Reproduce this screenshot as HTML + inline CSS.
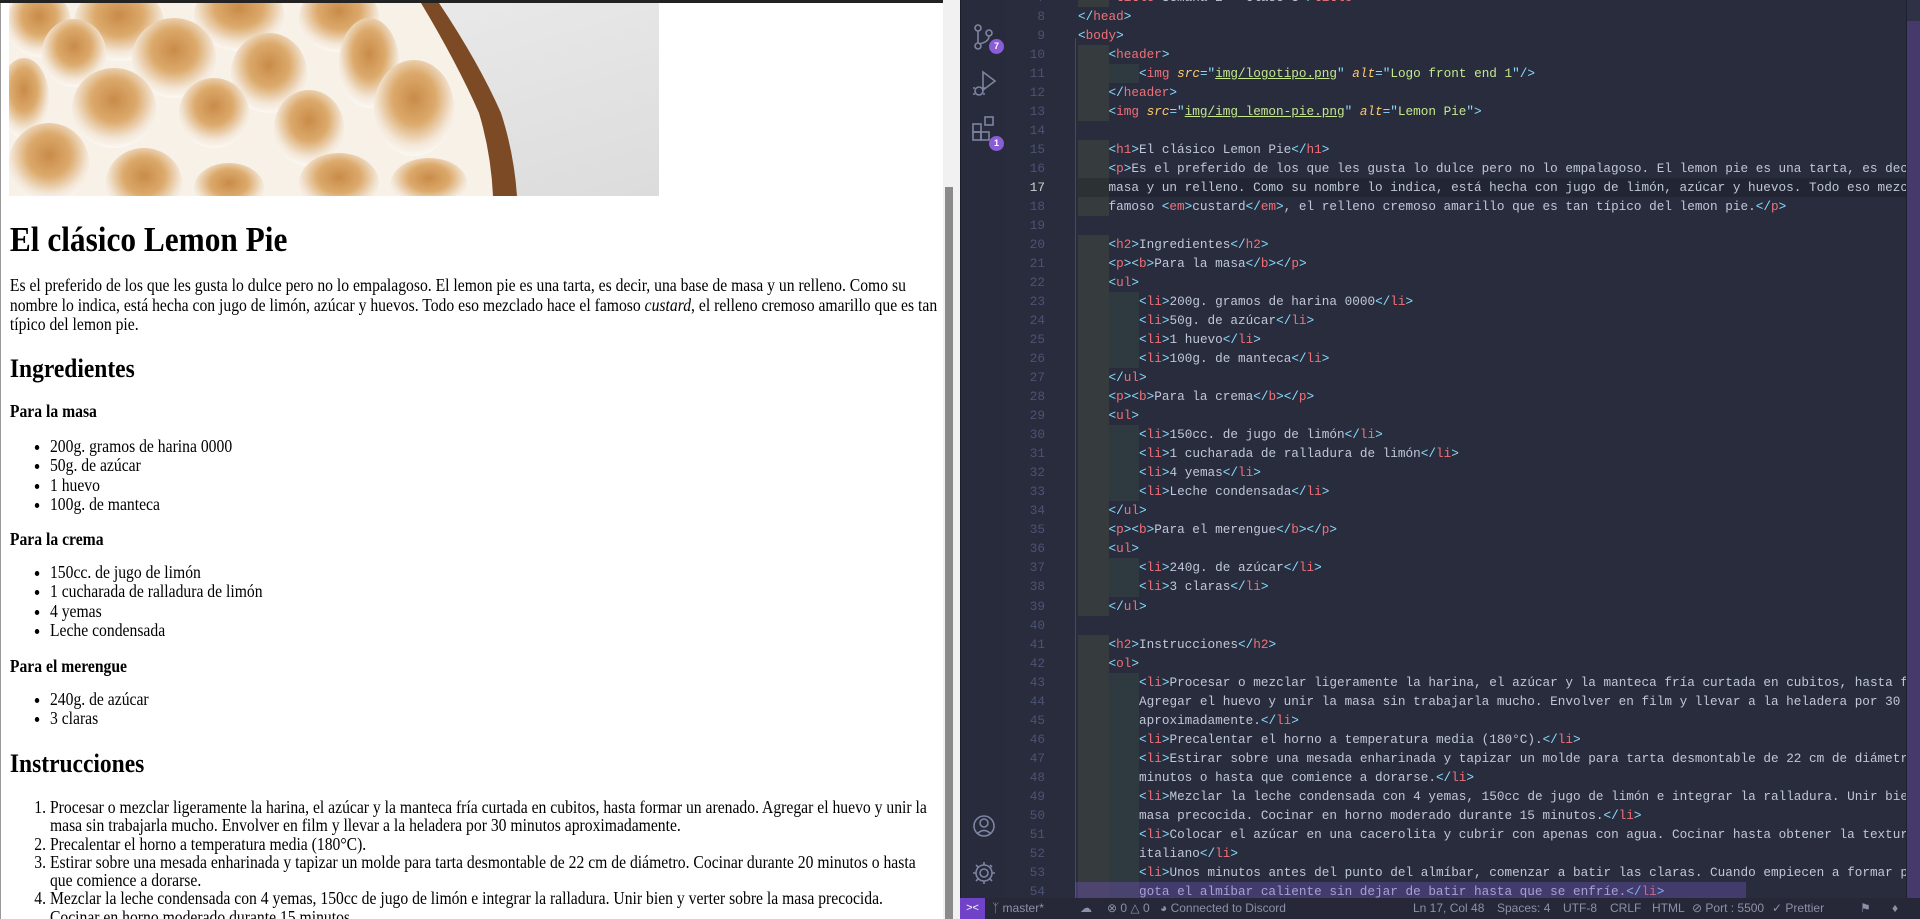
<!DOCTYPE html>
<html><head><meta charset="utf-8">
<style>
*{margin:0;padding:0;box-sizing:border-box}
html,body{width:1920px;height:919px;overflow:hidden;background:#292c3d}
#left{position:absolute;left:0;top:0;width:943px;height:919px;background:#fff;overflow:hidden;font-family:"Liberation Serif",serif;color:#000;border-left:1px solid #999}
#sc{position:absolute;left:0;top:0;width:1060px;height:919px;transform:scaleX(0.89);transform-origin:0 0}
#topbar{position:absolute;left:0;top:0;width:960px;height:3px;background:#222}
.abs{position:absolute;left:10px;white-space:nowrap}
h1{font-size:35.2px;line-height:40px;font-weight:bold}
h2{font-size:26.4px;line-height:30px;font-weight:bold}
.tx{font-size:17.6px}
ul.b,ol.n{position:absolute;left:55px;font-size:17.6px;line-height:19.3px;white-space:nowrap}
ul.b li{list-style:disc}
ol.n li{list-style:decimal}
#sb{position:absolute;left:943px;top:0;width:17px;height:919px;background:#f1f1f1}
#thumb{position:absolute;left:945px;top:187px;width:8px;height:732px;background:#8a8a8a}
#act{position:absolute;left:960px;top:0;width:46px;height:898px;background:#282b3b;border-left:1px solid #1c1e2a}
#ed{position:absolute;left:1006px;top:0;width:900px;height:898px;background:#292c3d;overflow:hidden}
#mm{position:absolute;left:1906px;top:0;width:14px;height:898px;background:#453a6b;border-left:1px solid #1e2030}
#mm2{position:absolute;left:1907px;top:0;width:13px;height:21px;background:#2f3146}
#lines{position:absolute;left:0;top:-12px;width:900px;font-family:"Liberation Mono",monospace;font-size:12.7px;line-height:19.02px;color:#bfc7d8}
.l{position:relative;height:19.02px;white-space:pre;padding-left:72px}
.l .num{position:absolute;left:0;width:39px;text-align:right;color:#4c5374}
.g1,.g2{display:inline-block;width:30.5px;height:19.02px;vertical-align:top}
.g1{background:#363b3e}.g2{background:#2f3a40}
.c{color:#89ddff}.t{color:#f07178}.a{color:#ffcb6b;font-style:italic}.s{color:#c3e88d;text-decoration:underline;text-decoration-color:#c3e88d}
.cur::before{content:"";position:absolute;left:72px;top:0;right:0;height:19px;background:#222534;z-index:-1}
#lines{z-index:1}
.cur .num{color:#d0d0d0}
.cur .g1{background:#2c3134}
.sel::after{content:"";position:absolute;left:69px;top:0;width:671px;height:19px;background:rgba(120,90,200,.35)}
#redl{position:absolute;left:1075px;top:38px;width:1px;height:860px;background:#7a3440}
#status{position:absolute;left:960px;top:898px;width:960px;height:21px;background:#262838;font-family:"Liberation Sans",sans-serif;font-size:12px;color:#8c91a8;line-height:21px;white-space:nowrap}
#status span{position:absolute;top:0}
.badge{position:absolute;width:15px;height:15px;border-radius:50%;background:#8a5cd6;color:#fff;font:bold 9px/15px "Liberation Sans",sans-serif;text-align:center}
</style></head><body>
<div id="left">
<svg width="650" height="193" style="position:absolute;left:8px;top:3px" viewBox="0 0 650 193">
<defs>
<radialGradient id="m" cx="0.5" cy="0.4" r="0.6"><stop offset="0" stop-color="#c98b48"/><stop offset="0.45" stop-color="#dcaa6c"/><stop offset="0.8" stop-color="#f3e6d6"/><stop offset="1" stop-color="#fbf8f3"/></radialGradient>
<linearGradient id="mar" x1="0" y1="0" x2="1" y2="1"><stop offset="0" stop-color="#efefef"/><stop offset="1" stop-color="#dcdcdc"/></linearGradient>
</defs>
<rect width="650" height="193" fill="url(#mar)"/>
<path d="M0 0 H430 Q470 60 492 110 Q505 150 508 193 H0Z" fill="#7c4a24"/>
<path d="M0 0 H412 Q448 60 470 110 Q482 150 484 193 H0Z" fill="#f7f1e8"/>
<g fill="url(#m)">
<ellipse cx="30" cy="20" rx="32" ry="34"/><ellipse cx="110" cy="20" rx="45" ry="38"/><ellipse cx="230" cy="12" rx="45" ry="36"/><ellipse cx="330" cy="15" rx="40" ry="34"/>
<ellipse cx="65" cy="50" rx="32" ry="34"/><ellipse cx="165" cy="55" rx="42" ry="40"/><ellipse cx="260" cy="70" rx="38" ry="40"/><ellipse cx="360" cy="60" rx="30" ry="45"/>
<ellipse cx="15" cy="95" rx="25" ry="40"/><ellipse cx="105" cy="105" rx="42" ry="40"/><ellipse cx="205" cy="110" rx="35" ry="35"/><ellipse cx="300" cy="125" rx="35" ry="38"/><ellipse cx="405" cy="105" rx="40" ry="48"/>
<ellipse cx="40" cy="160" rx="40" ry="40"/><ellipse cx="135" cy="180" rx="38" ry="35"/><ellipse cx="220" cy="185" rx="35" ry="25"/><ellipse cx="330" cy="180" rx="40" ry="30"/><ellipse cx="420" cy="180" rx="38" ry="25"/>
</g>
</svg>
<div id="sc">
<h1 class="abs" style="top:220px">El clásico Lemon Pie</h1>
<p class="abs tx" style="top:276px;line-height:19.7px;white-space:normal;width:1045px">Es el preferido de los que les gusta lo dulce pero no lo empalagoso. El lemon pie es una tarta, es decir, una base de masa y un relleno. Como su nombre lo indica, está hecha con jugo de limón, azúcar y huevos. Todo eso mezclado hace el famoso <em>custard</em>, el relleno cremoso amarillo que es tan típico del lemon pie.</p>
<h2 class="abs" style="top:353px">Ingredientes</h2>
<p class="abs tx" style="top:401px;line-height:20px"><b>Para la masa</b></p>
<ul class="b" style="top:437px"><li>200g. gramos de harina 0000</li><li>50g. de azúcar</li><li>1 huevo</li><li>100g. de manteca</li></ul>
<p class="abs tx" style="top:529px;line-height:20px"><b>Para la crema</b></p>
<ul class="b" style="top:563px"><li>150cc. de jugo de limón</li><li>1 cucharada de ralladura de limón</li><li>4 yemas</li><li>Leche condensada</li></ul>
<p class="abs tx" style="top:656px;line-height:20px"><b>Para el merengue</b></p>
<ul class="b" style="top:690px"><li>240g. de azúcar</li><li>3 claras</li></ul>
<h2 class="abs" style="top:748px">Instrucciones</h2>
<ol class="n" style="top:798px;white-space:normal;width:995px;line-height:18.3px"><li>Procesar o mezclar ligeramente la harina, el azúcar y la manteca fría curtada en cubitos, hasta formar un arenado. Agregar el huevo y unir la masa sin trabajarla mucho. Envolver en film y llevar a la heladera por 30 minutos aproximadamente.</li><li>Precalentar el horno a temperatura media (180°C).</li><li>Estirar sobre una mesada enharinada y tapizar un molde para tarta desmontable de 22 cm de diámetro. Cocinar durante 20 minutos o hasta que comience a dorarse.</li><li>Mezclar la leche condensada con 4 yemas, 150cc de jugo de limón e integrar la ralladura. Unir bien y verter sobre la masa precocida. Cocinar en horno moderado durante 15 minutos.</li></ol>
</div>
</div>
<div id="topbar"></div>
<div id="sb"></div><div id="thumb"></div>

<div id="act">
<svg width="46" height="898" viewBox="0 0 46 898" fill="none" stroke="#7e84a2" stroke-width="1.6">
<circle cx="17" cy="28" r="3"/><circle cx="17" cy="46" r="3"/><circle cx="28" cy="33" r="3"/><path d="M17 31v12M28 36q0 6-10 8"/>
<path d="M22 72l12 9-12 9z"/><circle cx="18" cy="91" r="4"/><path d="M12 88h2M12 94h2M22 88h2M22 94h2"/>
<rect x="12" y="124" width="8" height="8"/><rect x="12" y="132" width="8" height="8"/><rect x="20" y="132" width="8" height="8"/><rect x="24" y="117" width="8" height="8"/>
<circle cx="23" cy="826" r="10"/><circle cx="23" cy="823" r="4"/><path d="M16 834q7-7 14 0"/>
<circle cx="23" cy="873" r="4"/><path d="M23 862v3M23 881v3M12 873h3M31 873h3M15 865l2 2M29 879l2 2M15 881l2-2M29 865l2 2"/><circle cx="23" cy="873" r="8"/>
</svg>
<div class="badge" style="left:28px;top:39px">7</div>
<div class="badge" style="left:28px;top:136px">1</div>
</div>
<div style="position:absolute;left:1010px;top:26px;color:#7e84a2;font:16px 'Liberation Sans',sans-serif">&#10216;</div>

<div id="ed">
<div id="lines">
<div class="l"><span class="num">7</span><i class="g1"></i><span class="c">&lt;</span><span class="t">title</span><span class="c">&gt;</span>Semana 2 - Clase 3<span class="c">&lt;/</span><span class="t">title</span><span class="c">&gt;</span></div>
<div class="l"><span class="num">8</span><span class="c">&lt;/</span><span class="t">head</span><span class="c">&gt;</span></div>
<div class="l"><span class="num">9</span><span class="c">&lt;</span><span class="t">body</span><span class="c">&gt;</span></div>
<div class="l"><span class="num">10</span><i class="g1"></i><span class="c">&lt;</span><span class="t">header</span><span class="c">&gt;</span></div>
<div class="l"><span class="num">11</span><i class="g1"></i><i class="g2"></i><span class="c">&lt;</span><span class="t">img</span> <span class="a">src</span><span class="c">="</span><span class="s">img/logotipo.png</span><span class="c">"</span> <span class="a">alt</span><span class="c">="</span><span style="color:#c3e88d">Logo front end 1</span><span class="c">"/&gt;</span></div>
<div class="l"><span class="num">12</span><i class="g1"></i><span class="c">&lt;/</span><span class="t">header</span><span class="c">&gt;</span></div>
<div class="l"><span class="num">13</span><i class="g1"></i><span class="c">&lt;</span><span class="t">img</span> <span class="a">src</span><span class="c">="</span><span class="s">img/img_lemon-pie.png</span><span class="c">"</span> <span class="a">alt</span><span class="c">="</span><span style="color:#c3e88d">Lemon Pie</span><span class="c">"&gt;</span></div>
<div class="l"><span class="num">14</span></div>
<div class="l"><span class="num">15</span><i class="g1"></i><span class="c">&lt;</span><span class="t">h1</span><span class="c">&gt;</span>El clásico Lemon Pie<span class="c">&lt;/</span><span class="t">h1</span><span class="c">&gt;</span></div>
<div class="l"><span class="num">16</span><i class="g1"></i><span class="c">&lt;</span><span class="t">p</span><span class="c">&gt;</span>Es el preferido de los que les gusta lo dulce pero no lo empalagoso. El lemon pie es una tarta, es decir, una base de</div>
<div class="l cur"><span class="num">17</span><i class="g1"></i>masa y un relleno. Como su nombre lo indica, está hecha con jugo de limón, azúcar y huevos. Todo eso mezclado hace el</div>
<div class="l"><span class="num">18</span><i class="g1"></i>famoso <span class="c">&lt;</span><span class="t">em</span><span class="c">&gt;</span>custard<span class="c">&lt;/</span><span class="t">em</span><span class="c">&gt;</span>, el relleno cremoso amarillo que es tan típico del lemon pie.<span class="c">&lt;/</span><span class="t">p</span><span class="c">&gt;</span></div>
<div class="l"><span class="num">19</span></div>
<div class="l"><span class="num">20</span><i class="g1"></i><span class="c">&lt;</span><span class="t">h2</span><span class="c">&gt;</span>Ingredientes<span class="c">&lt;/</span><span class="t">h2</span><span class="c">&gt;</span></div>
<div class="l"><span class="num">21</span><i class="g1"></i><span class="c">&lt;</span><span class="t">p</span><span class="c">&gt;&lt;</span><span class="t">b</span><span class="c">&gt;</span>Para la masa<span class="c">&lt;/</span><span class="t">b</span><span class="c">&gt;&lt;/</span><span class="t">p</span><span class="c">&gt;</span></div>
<div class="l"><span class="num">22</span><i class="g1"></i><span class="c">&lt;</span><span class="t">ul</span><span class="c">&gt;</span></div>
<div class="l"><span class="num">23</span><i class="g1"></i><i class="g2"></i><span class="c">&lt;</span><span class="t">li</span><span class="c">&gt;</span>200g. gramos de harina 0000<span class="c">&lt;/</span><span class="t">li</span><span class="c">&gt;</span></div>
<div class="l"><span class="num">24</span><i class="g1"></i><i class="g2"></i><span class="c">&lt;</span><span class="t">li</span><span class="c">&gt;</span>50g. de azúcar<span class="c">&lt;/</span><span class="t">li</span><span class="c">&gt;</span></div>
<div class="l"><span class="num">25</span><i class="g1"></i><i class="g2"></i><span class="c">&lt;</span><span class="t">li</span><span class="c">&gt;</span>1 huevo<span class="c">&lt;/</span><span class="t">li</span><span class="c">&gt;</span></div>
<div class="l"><span class="num">26</span><i class="g1"></i><i class="g2"></i><span class="c">&lt;</span><span class="t">li</span><span class="c">&gt;</span>100g. de manteca<span class="c">&lt;/</span><span class="t">li</span><span class="c">&gt;</span></div>
<div class="l"><span class="num">27</span><i class="g1"></i><span class="c">&lt;/</span><span class="t">ul</span><span class="c">&gt;</span></div>
<div class="l"><span class="num">28</span><i class="g1"></i><span class="c">&lt;</span><span class="t">p</span><span class="c">&gt;&lt;</span><span class="t">b</span><span class="c">&gt;</span>Para la crema<span class="c">&lt;/</span><span class="t">b</span><span class="c">&gt;&lt;/</span><span class="t">p</span><span class="c">&gt;</span></div>
<div class="l"><span class="num">29</span><i class="g1"></i><span class="c">&lt;</span><span class="t">ul</span><span class="c">&gt;</span></div>
<div class="l"><span class="num">30</span><i class="g1"></i><i class="g2"></i><span class="c">&lt;</span><span class="t">li</span><span class="c">&gt;</span>150cc. de jugo de limón<span class="c">&lt;/</span><span class="t">li</span><span class="c">&gt;</span></div>
<div class="l"><span class="num">31</span><i class="g1"></i><i class="g2"></i><span class="c">&lt;</span><span class="t">li</span><span class="c">&gt;</span>1 cucharada de ralladura de limón<span class="c">&lt;/</span><span class="t">li</span><span class="c">&gt;</span></div>
<div class="l"><span class="num">32</span><i class="g1"></i><i class="g2"></i><span class="c">&lt;</span><span class="t">li</span><span class="c">&gt;</span>4 yemas<span class="c">&lt;/</span><span class="t">li</span><span class="c">&gt;</span></div>
<div class="l"><span class="num">33</span><i class="g1"></i><i class="g2"></i><span class="c">&lt;</span><span class="t">li</span><span class="c">&gt;</span>Leche condensada<span class="c">&lt;/</span><span class="t">li</span><span class="c">&gt;</span></div>
<div class="l"><span class="num">34</span><i class="g1"></i><span class="c">&lt;/</span><span class="t">ul</span><span class="c">&gt;</span></div>
<div class="l"><span class="num">35</span><i class="g1"></i><span class="c">&lt;</span><span class="t">p</span><span class="c">&gt;&lt;</span><span class="t">b</span><span class="c">&gt;</span>Para el merengue<span class="c">&lt;/</span><span class="t">b</span><span class="c">&gt;&lt;/</span><span class="t">p</span><span class="c">&gt;</span></div>
<div class="l"><span class="num">36</span><i class="g1"></i><span class="c">&lt;</span><span class="t">ul</span><span class="c">&gt;</span></div>
<div class="l"><span class="num">37</span><i class="g1"></i><i class="g2"></i><span class="c">&lt;</span><span class="t">li</span><span class="c">&gt;</span>240g. de azúcar<span class="c">&lt;/</span><span class="t">li</span><span class="c">&gt;</span></div>
<div class="l"><span class="num">38</span><i class="g1"></i><i class="g2"></i><span class="c">&lt;</span><span class="t">li</span><span class="c">&gt;</span>3 claras<span class="c">&lt;/</span><span class="t">li</span><span class="c">&gt;</span></div>
<div class="l"><span class="num">39</span><i class="g1"></i><span class="c">&lt;/</span><span class="t">ul</span><span class="c">&gt;</span></div>
<div class="l"><span class="num">40</span></div>
<div class="l"><span class="num">41</span><i class="g1"></i><span class="c">&lt;</span><span class="t">h2</span><span class="c">&gt;</span>Instrucciones<span class="c">&lt;/</span><span class="t">h2</span><span class="c">&gt;</span></div>
<div class="l"><span class="num">42</span><i class="g1"></i><span class="c">&lt;</span><span class="t">ol</span><span class="c">&gt;</span></div>
<div class="l"><span class="num">43</span><i class="g1"></i><i class="g2"></i><span class="c">&lt;</span><span class="t">li</span><span class="c">&gt;</span>Procesar o mezclar ligeramente la harina, el azúcar y la manteca fría curtada en cubitos, hasta formar un arenado.</div>
<div class="l"><span class="num">44</span><i class="g1"></i><i class="g2"></i>Agregar el huevo y unir la masa sin trabajarla mucho. Envolver en film y llevar a la heladera por 30 minutos</div>
<div class="l"><span class="num">45</span><i class="g1"></i><i class="g2"></i>aproximadamente.<span class="c">&lt;/</span><span class="t">li</span><span class="c">&gt;</span></div>
<div class="l"><span class="num">46</span><i class="g1"></i><i class="g2"></i><span class="c">&lt;</span><span class="t">li</span><span class="c">&gt;</span>Precalentar el horno a temperatura media (180°C).<span class="c">&lt;/</span><span class="t">li</span><span class="c">&gt;</span></div>
<div class="l"><span class="num">47</span><i class="g1"></i><i class="g2"></i><span class="c">&lt;</span><span class="t">li</span><span class="c">&gt;</span>Estirar sobre una mesada enharinada y tapizar un molde para tarta desmontable de 22 cm de diámetro. Cocinar durante 20</div>
<div class="l"><span class="num">48</span><i class="g1"></i><i class="g2"></i>minutos o hasta que comience a dorarse.<span class="c">&lt;/</span><span class="t">li</span><span class="c">&gt;</span></div>
<div class="l"><span class="num">49</span><i class="g1"></i><i class="g2"></i><span class="c">&lt;</span><span class="t">li</span><span class="c">&gt;</span>Mezclar la leche condensada con 4 yemas, 150cc de jugo de limón e integrar la ralladura. Unir bien y verter sobre la</div>
<div class="l"><span class="num">50</span><i class="g1"></i><i class="g2"></i>masa precocida. Cocinar en horno moderado durante 15 minutos.<span class="c">&lt;/</span><span class="t">li</span><span class="c">&gt;</span></div>
<div class="l"><span class="num">51</span><i class="g1"></i><i class="g2"></i><span class="c">&lt;</span><span class="t">li</span><span class="c">&gt;</span>Colocar el azúcar en una cacerolita y cubrir con apenas con agua. Cocinar hasta obtener la textura de almíbar o merengue</div>
<div class="l"><span class="num">52</span><i class="g1"></i><i class="g2"></i>italiano<span class="c">&lt;/</span><span class="t">li</span><span class="c">&gt;</span></div>
<div class="l"><span class="num">53</span><i class="g1"></i><i class="g2"></i><span class="c">&lt;</span><span class="t">li</span><span class="c">&gt;</span>Unos minutos antes del punto del almíbar, comenzar a batir las claras. Cuando empiecen a formar picos, agregar de a</div>
<div class="l sel"><span class="num">54</span><i class="g1"></i><i class="g2"></i>gota el almíbar caliente sin dejar de batir hasta que se enfríe.<span class="c">&lt;/</span><span class="t">li</span><span class="c">&gt;</span></div>
</div>
</div>
<div id="redl"></div>
<div id="mm"></div><div id="mm2"></div>

<div id="status">
<span style="left:0;width:25px;height:21px;background:#6f42c8;color:#fff;text-align:center;font-size:11px">&gt;&lt;</span>
<span style="left:32px">&#5833; master*</span>
<span style="left:120px">&#9729;</span>
<span style="left:147px">&#8855; 0 &#9651; 0</span>
<span style="left:200px">&#9685; Connected to Discord</span>
<span style="left:453px">Ln 17, Col 48</span>
<span style="left:537px">Spaces: 4</span>
<span style="left:603px">UTF-8</span>
<span style="left:650px">CRLF</span>
<span style="left:692px">HTML</span>
<span style="left:732px">&#8856; Port : 5500</span>
<span style="left:812px">&#10003; Prettier</span>
<span style="left:900px">&#9873;</span>
<span style="left:932px">&#9830;</span>
</div>
</body></html>
